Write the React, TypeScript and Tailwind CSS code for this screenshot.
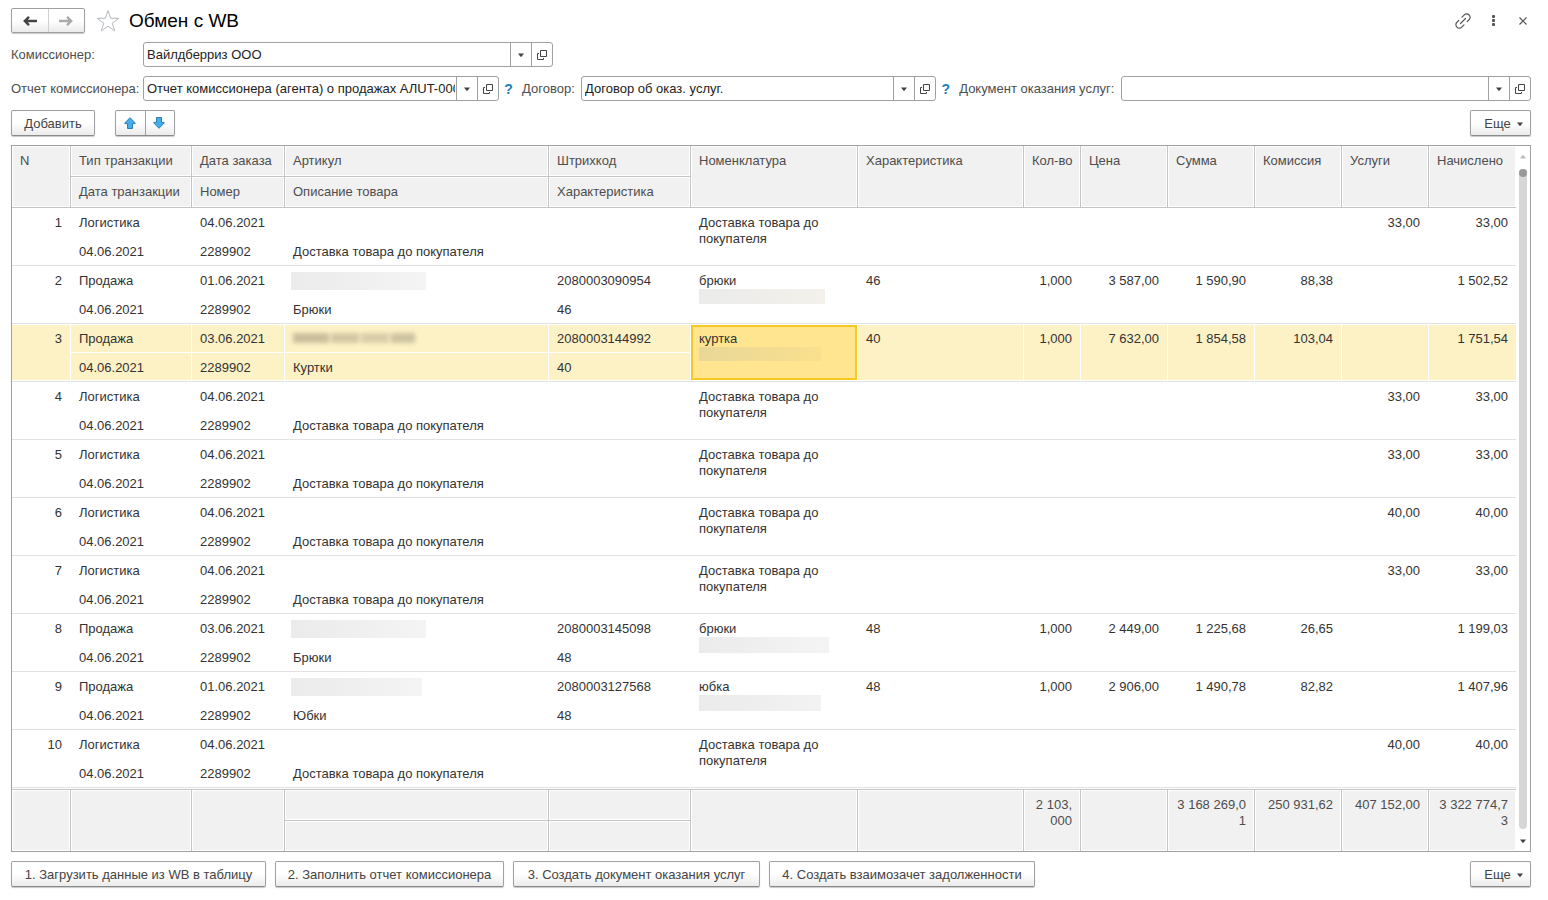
import React from 'react';
import clsx from 'clsx';

type Row = {
  type: string;
  orderDate: string;
  goods: string;
  barcode?: string;
  item: string;
  size?: string;
  qty?: string;
  price?: string;
  sum?: string;
  fee?: string;
  service?: string;
  total: string;
  articleMask?: string;
  itemMask?: string;
  selected?: boolean;
};

const logistics = (amount: string): Row => ({
  type: 'Логистика',
  orderDate: '04.06.2021',
  goods: 'Доставка товара до покупателя',
  item: 'Доставка товара до покупателя',
  service: amount,
  total: amount,
});

const rows: Row[] = [
  logistics('33,00'),
  {
    type: 'Продажа', orderDate: '01.06.2021', goods: 'Брюки', barcode: '2080003090954', item: 'брюки', size: '46',
    qty: '1,000', price: '3 587,00', sum: '1 590,90', fee: '88,38', total: '1 502,52',
    articleMask: 'w-[135px] h-[18px] bg-linear-to-r from-[#ebebeb] to-[#f4f4f4]',
    itemMask: 'w-[126px] h-[15px] bg-linear-to-r from-[#ebebeb] to-[#f3f1ea]',
  },
  {
    type: 'Продажа', orderDate: '03.06.2021', goods: 'Куртки', barcode: '2080003144992', item: 'куртка', size: '40',
    qty: '1,000', price: '7 632,00', sum: '1 854,58', fee: '103,04', total: '1 751,54',
    itemMask: 'w-[122px] h-[14px] bg-linear-to-r from-[#e9d798] to-[#f9e08d]',
    selected: true,
  },
  logistics('33,00'),
  logistics('33,00'),
  logistics('40,00'),
  logistics('33,00'),
  {
    type: 'Продажа', orderDate: '03.06.2021', goods: 'Брюки', barcode: '2080003145098', item: 'брюки', size: '48',
    qty: '1,000', price: '2 449,00', sum: '1 225,68', fee: '26,65', total: '1 199,03',
    articleMask: 'w-[135px] h-[18px] bg-linear-to-r from-[#ebebeb] to-[#f4f4f4]',
    itemMask: 'w-[130px] h-[16px] bg-linear-to-r from-[#ebebeb] to-[#f4f4f4]',
  },
  {
    type: 'Продажа', orderDate: '01.06.2021', goods: 'Юбки', barcode: '2080003127568', item: 'юбка', size: '48',
    qty: '1,000', price: '2 906,00', sum: '1 490,78', fee: '82,82', total: '1 407,96',
    articleMask: 'w-[131px] h-[18px] bg-linear-to-r from-[#ebebeb] to-[#f4f4f4]',
    itemMask: 'w-[122px] h-[16px] bg-linear-to-r from-[#ebebeb] to-[#f2f2f2]',
  },
  logistics('40,00'),
];

const columns = [59, 121, 93, 264, 142, 167, 166, 57, 87, 87, 87, 87, 87];

const buttonStyle =
  'flex h-[26px] items-center justify-center whitespace-nowrap rounded-[2px] border border-[#a0a0a0] border-b-[#8a8a8a] bg-linear-to-b from-white from-50% to-[#ebebeb] text-[#444] shadow-[0_1px_1px_#c8c8c8]';

const Caret: React.FC<{ up?: boolean; className?: string }> = ({ up, className }) => (
  <svg viewBox="0 0 6 4" className={clsx('h-1 w-1.5 fill-current', up && 'rotate-180', className)}>
    <path d="M0 .5h6L3.5 3.800h-1z" />
  </svg>
);

const LookupField: React.FC<{ id: string; value: string; className?: string }> = ({ id, value, className }) => (
  <div className={clsx('flex h-[25px] min-w-0 rounded-[3px] border border-[#a0a0a0] bg-white text-[#444]', className)}>
    <input id={id} defaultValue={value} className="ml-[3px] mr-px min-w-0 flex-1 bg-transparent text-[#222] outline-none" />
    <button type="button" aria-label="Выбрать из списка" className="flex w-[21px] items-center justify-center border-l border-[#a0a0a0]">
      <Caret />
    </button>
    <button type="button" aria-label="Открыть" className="flex w-[21px] items-center justify-center border-l border-[#a0a0a0]">
      <svg viewBox="0 0 10 10" className="h-2.5 w-2.5" fill="none" stroke="currentColor">
        <path d="M3.500 .5h6v6h-6zM2 3.500H.5v6h6V8" />
      </svg>
    </button>
  </div>
);

const MoreButton: React.FC = () => (
  <button type="button" className={clsx(buttonStyle, 'ml-auto w-[61px] gap-1.5 pl-1.5 pt-px')}>
    Еще
    <Caret />
  </button>
);

const BlueArrow: React.FC<{ down?: boolean }> = ({ down }) => (
  <svg viewBox="0 0 12 12" className={clsx('h-3 w-3', down && 'rotate-180')} fill="#45aeea" stroke="#2a7fb5">
    <path d="M6 .7 11.200 6v.6H8.500v4.900h-5V6.600H.8V6z" />
  </svg>
);

const headCell = 'whitespace-nowrap border-b border-r border-[#c4c4c4] bg-[#f1f1f1] px-2 text-left align-top font-normal text-[#4d4d4d] shadow-[inset_0_0_0_1px_#fff]';

const HeaderCells: React.FC<{ titles: string[]; tall?: boolean }> = ({ titles, tall }) => (
  <>
    {titles.map((title) => (
      <th key={title} scope="col" rowSpan={tall ? 2 : 1} className={clsx(headCell, 'h-[31px] pt-[7px] last:border-r-0')}>
        {title}
      </th>
    ))}
  </>
);

const footCell = 'h-[31px] border-r border-t border-[#c4c4c4] bg-[#f1f1f1] shadow-[inset_0_0_0_1px_#fff]';

const FooterCell: React.FC<{ value?: string; split?: boolean }> = ({ value, split }) => (
  <td
    rowSpan={split ? 1 : 2}
    className={clsx(footCell, 'whitespace-pre px-2 pt-[7px] text-right align-top text-[#4d4d4d] last:border-r-0')}
  >
    {value}
  </td>
);

const DataRow: React.FC<{ row: Row; index: number }> = ({ row, index }) => {
  const base = 'pl-2 align-top pt-[7px]';
  const top = clsx(base, 'h-[29px]', row.selected && 'border-b border-r border-white bg-[#fdf1c6] shadow-[inset_0_1px_0_#fff]');
  const bottom = clsx(base, 'h-[29px] border-b border-[#e2e2e2]', row.selected && 'border-r border-r-white bg-[#fdf1c6] shadow-[inset_0_-1px_0_#fff]');
  const full = clsx(
    base,
    'border-b border-[#e2e2e2] last:pr-2',
    row.selected
      ? 'border-r border-r-white bg-[#fdf1c6] pr-2 shadow-[inset_0_1px_0_#fff,inset_0_-1px_0_#fff] last:border-r-0'
      : 'pr-[9px]',
  );

  return (
    <tbody>
      <tr>
        <td rowSpan={2} className={clsx(full, 'text-right')}>{index}</td>
        <td className={top}>{row.type}</td>
        <td className={top}>{row.orderDate}</td>
        {row.articleMask ? (
          <td className="h-[29px] pl-1.5 pt-1.5 align-top">
            <div className={row.articleMask} />
          </td>
        ) : (
          <td className={top}>
            {row.selected && (
              <div className="flex h-3.5 items-center gap-0.5 blur-[2px]">
                <div className="h-2.5 w-9 bg-[#cabf9c]" />
                <div className="h-2.5 w-7 bg-[#d3c8a4]" />
                <div className="h-2.5 w-7 bg-[#d8cda8]" />
                <div className="h-2.5 w-6 bg-[#cec3a0]" />
              </div>
            )}
          </td>
        )}
        <td className={top}>{row.barcode}</td>
        {row.selected ? (
          <td rowSpan={2} className="border-b border-r border-b-[#e2e2e2] border-r-white py-px align-top">
            <div className="h-[55px] border-2 border-[#f8c822] bg-[#ffe58f] px-1.5 pt-1">
              {row.item}
              <div className={row.itemMask} />
            </div>
          </td>
        ) : (
          <td rowSpan={2} className={full}>
            {row.item}
            {row.itemMask && <div className={row.itemMask} />}
          </td>
        )}
        <td rowSpan={2} className={full}>{row.size}</td>
        {[row.qty, row.price, row.sum, row.fee, row.service, row.total].map((value, i) => (
          <td key={i} rowSpan={2} className={clsx(full, 'whitespace-nowrap text-right')}>{value}</td>
        ))}
      </tr>
      <tr>
        <td className={bottom}>04.06.2021</td>
        <td className={bottom}>2289902</td>
        <td className={bottom}>{row.goods}</td>
        <td className={bottom}>{row.size}</td>
      </tr>
    </tbody>
  );
};

const App: React.FC = () => {
  return (
    <main className="flex flex-col gap-[9px] bg-white pb-3 pl-[11px] pr-[17px] pt-2 font-['Liberation_Sans',Arial,sans-serif] text-[13px] leading-4 text-[#333]">
      <header className="flex h-[25px] items-center">
        <div className="flex h-[25px] w-[74px] rounded-[2px] border border-[#a0a0a0] bg-linear-to-b from-white from-50% to-[#ebebeb] shadow-[0_1px_1px_#c8c8c8]">
          <button type="button" aria-label="Назад" className="flex flex-1 items-center justify-center text-[#444]">
            <svg viewBox="0 0 14 10" className="h-2.5 w-3.5" fill="none" stroke="currentColor" strokeWidth="2.400">
              <path d="M14 5H2M6 .8 1.800 5 6 9.200" />
            </svg>
          </button>
          <button type="button" aria-label="Вперед" className="flex flex-1 items-center justify-center border-l border-[#d0d0d0] text-[#aaa]">
            <svg viewBox="0 0 14 10" className="h-2.5 w-3.5" fill="none" stroke="currentColor" strokeWidth="2.400">
              <path d="M0 5h12M8 .8 12.200 5 8 9.200" />
            </svg>
          </button>
        </div>
        <button type="button" aria-label="В избранное" className="ml-[11px]">
          <svg viewBox="0 0 24 24" className="h-6 w-6" fill="none" stroke="#b4bac0">
            <path d="m12 1.500 2.600 7.700 8.200.1-6.600 4.800 2.500 7.800-6.700-4.700-6.700 4.700 2.500-7.800L1.200 9.300l8.200-.1z" />
          </svg>
        </button>
        <h1 className="ml-[9px] text-[19px] leading-6 text-black">Обмен с WB</h1>
        <div className="ml-auto flex items-center text-[#555]">
          <button type="button" aria-label="Получить ссылку" className="flex w-[30px] justify-center">
            <svg viewBox="0 0 16 16" className="h-4 w-4" fill="none" stroke="currentColor" strokeWidth="1.200" strokeLinecap="round">
              <path d="M5.500 10.500l5-5" />
              <path d="M7 4.200 9.300 1.900a3.300 3.300 0 0 1 4.800 0 3.300 3.300 0 0 1 0 4.800L12.300 8.500" />
              <path d="M9 11.800 6.700 14.100a3.300 3.300 0 0 1-4.800 0 3.300 3.300 0 0 1 0-4.800L3.700 7.500" />
            </svg>
          </button>
          <button type="button" aria-label="Меню" className="flex w-[30px] justify-center">
            <svg viewBox="0 0 3 11" className="h-[11px] w-[3px] fill-current">
              <rect width="3" height="3" rx="1" />
              <rect y="4" width="3" height="3" rx="1" />
              <rect y="8" width="3" height="3" rx="1" />
            </svg>
          </button>
          <button type="button" aria-label="Закрыть" className="ml-[7px] flex w-4 justify-center">
            <svg viewBox="0 0 8 8" className="h-2 w-2" fill="none" stroke="currentColor" strokeWidth="1.200">
              <path d="m.5.5 7 7m0-7-7 7" />
            </svg>
          </button>
        </div>
      </header>

      <div className="flex items-center">
        <label htmlFor="agent" className="w-[132px] text-[#4d4d4d]">Комиссионер:</label>
        <LookupField id="agent" value="Вайлдберриз ООО" className="w-[410px]" />
      </div>

      <div className="flex items-center whitespace-nowrap text-[#4d4d4d]">
        <label htmlFor="report" className="w-[132px] shrink-0">Отчет комиссионера:</label>
        <LookupField id="report" value="Отчет комиссионера (агента) о продажах АЛUT-000012" className="flex-[356]" />
        <button type="button" className="w-[23px] pr-1 text-sm font-bold text-[#1a80c4]">?</button>
        <label htmlFor="contract" className="w-[59px]">Договор:</label>
        <LookupField id="contract" value="Договор об оказ. услуг." className="flex-[355]" />
        <button type="button" className="w-[23px] pr-1 text-sm font-bold text-[#1a80c4]">?</button>
        <label htmlFor="service" className="w-[162px]">Документ оказания услуг:</label>
        <LookupField id="service" value="" className="flex-[410]" />
      </div>

      <div className="flex">
        <button type="button" className={clsx(buttonStyle, 'w-[84px] pt-px')}>Добавить</button>
        <div className={clsx(buttonStyle, 'ml-5 w-[60px]')}>
          <button type="button" aria-label="Переместить вверх" className="flex h-full w-[29px] items-center justify-center pr-px">
            <BlueArrow />
          </button>
          <button type="button" aria-label="Переместить вниз" className="flex h-full w-[29px] items-center justify-center border-l border-[#a0a0a0] pr-[3px]">
            <BlueArrow down />
          </button>
        </div>
        <MoreButton />
      </div>

      <section className="flex border border-[#a0a0a0]">
        <table className="w-full min-w-0 table-fixed border-separate border-spacing-0">
          <colgroup>
            {columns.map((width, i) => (
              <col key={i} style={{ width }} />
            ))}
          </colgroup>
          <thead>
            <tr>
              <HeaderCells tall titles={['N']} />
              <HeaderCells titles={['Тип транзакции', 'Дата заказа', 'Артикул', 'Штрихкод']} />
              <HeaderCells tall titles={['Номенклатура', 'Характеристика', 'Кол-во', 'Цена', 'Сумма', 'Комиссия', 'Услуги', 'Начислено']} />
            </tr>
            <tr>
              {['Дата транзакции', 'Номер', 'Описание товара', 'Характеристика'].map((title) => (
                <th key={title} scope="col" className={clsx(headCell, 'h-[31px] pt-[7px]')}>{title}</th>
              ))}
            </tr>
          </thead>
          {rows.map((row, i) => (
            <DataRow key={i} row={row} index={i + 1} />
          ))}
          <tfoot>
            <tr>
              <td colSpan={13} className="h-px" />
            </tr>
            <tr>
              <FooterCell />
              <FooterCell />
              <FooterCell />
              <FooterCell split />
              <FooterCell split />
              <FooterCell />
              <FooterCell />
              <FooterCell value={'2 103,\n000'} />
              <FooterCell />
              <FooterCell value={'3 168 269,0\n1'} />
              <FooterCell value="250 931,62" />
              <FooterCell value="407 152,00" />
              <FooterCell value={'3 322 774,7\n3'} />
            </tr>
            <tr>
              <td className={footCell} />
              <td className={footCell} />
            </tr>
          </tfoot>
        </table>
        <div className="flex w-3.5 shrink-0 flex-col items-center pb-2 pt-[9px]">
          <Caret up className="text-[#bbb]" />
          <div className="mb-2.5 mt-2.5 w-2 flex-1 rounded-full bg-[#d6d6d6]">
            <div className="h-2 rounded-full bg-[#999]" />
          </div>
          <Caret className="text-[#444]" />
        </div>
      </section>

      <footer className="flex gap-[9px]">
        <button type="button" className={clsx(buttonStyle, 'w-[255px] pt-px')}>1. Загрузить данные из WB в таблицу</button>
        <button type="button" className={clsx(buttonStyle, 'w-[229px] pt-px')}>2. Заполнить отчет комиссионера</button>
        <button type="button" className={clsx(buttonStyle, 'w-[247px] pt-px')}>3. Создать документ оказания услуг</button>
        <button type="button" className={clsx(buttonStyle, 'w-[266px] pt-px')}>4. Создать взаимозачет задолженности</button>
        <MoreButton />
      </footer>
    </main>
  );
};

export default App;
